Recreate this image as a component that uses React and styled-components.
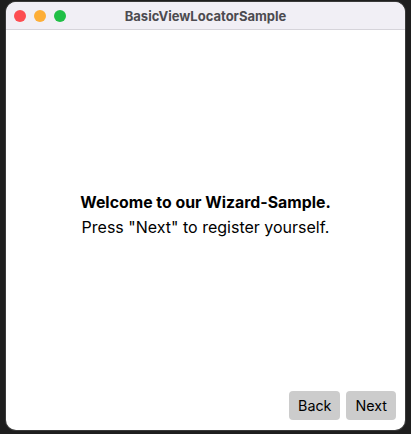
import React from "react";
import styled, { createGlobalStyle } from "styled-components";

const Global = createGlobalStyle`
  html, body { margin: 0; padding: 0; background: #1e1e1e; }
  body { width: 411px; height: 434px; overflow: hidden; font-family: Inter, "Noto Sans", sans-serif; }
`;

const Screen = styled.div`
  width: 411px;
  height: 434px;
  padding: 2px 6px 4px 6px;
  box-sizing: border-box;
  display: flex;
`;

const Window = styled.div`
  flex: 1;
  display: flex;
  flex-direction: column;
  background: #ffffff;
  border-radius: 10px;
  overflow: hidden;
  box-shadow: 0 0 0 1px #3a3a3a;
`;

const TitleBar = styled.div`
  height: 27px;
  flex: none;
  background: #f1eff5;
  border-bottom: 1px solid #d6d4da;
  display: flex;
  align-items: center;
  position: relative;
  padding-left: 8px;
  gap: 8px;
`;

const Light = styled.span`
  width: 12px;
  height: 12px;
  border-radius: 50%;
  background: ${(p) => p.$c};
`;

const Title = styled.div`
  position: absolute;
  left: 0;
  right: 0;
  top: 0;
  bottom: 0;
  display: flex;
  align-items: center;
  justify-content: center;
  font-size: 13px;
  font-weight: 700;
  color: #4c4b50;
  pointer-events: none;
`;

const Content = styled.div`
  flex: 1;
  display: flex;
  flex-direction: column;
  align-items: center;
  justify-content: center;
  padding-top: 8px;
  color: #000;
`;

const Heading = styled.div`
  font-size: 15.85px;
  font-weight: 700;
  line-height: 25px;
`;

const Line = styled.div`
  font-size: 16px;
  line-height: 25px;
`;

const Footer = styled.div`
  flex: none;
  display: flex;
  justify-content: flex-end;
  gap: 6px;
  padding: 0 9px 10px 0;
`;

const Button = styled.button`
  height: 29px;
  padding: 0 9px;
  border: none;
  border-radius: 4px;
  background: #cccccc;
  color: #000;
  font-family: Inter, "Noto Sans", sans-serif;
  font-size: 14.3px;
`;

export default function App() {
  return (
    <>
      <Global />
      <Screen>
        <Window>
          <TitleBar>
            <Light $c="#fd4d51" />
            <Light $c="#fdae37" />
            <Light $c="#20bf46" />
            <Title>BasicViewLocatorSample</Title>
          </TitleBar>
          <Content>
            <Heading>Welcome to our Wizard-Sample.</Heading>
            <Line>Press "Next" to register yourself.</Line>
          </Content>
          <Footer>
            <Button>Back</Button>
            <Button>Next</Button>
          </Footer>
        </Window>
      </Screen>
    </>
  );
}
